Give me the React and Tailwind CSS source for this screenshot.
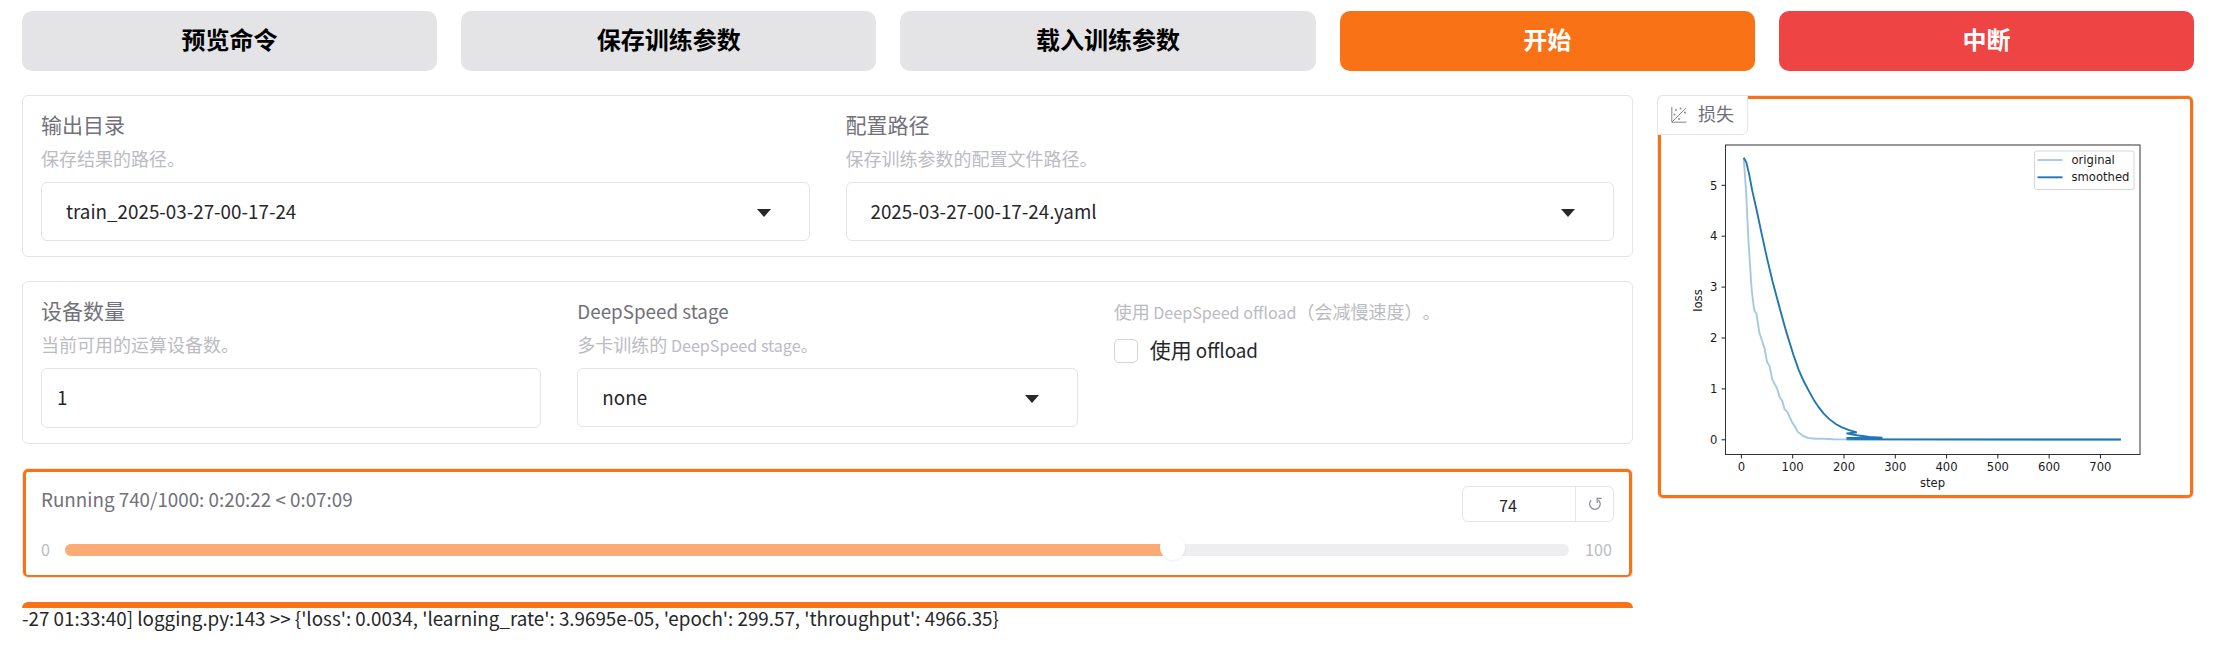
import React from "react";

const ACTIONS = [
  { label: "预览命令", tone: "bg-[#e4e4e7] text-black" },
  { label: "保存训练参数", tone: "bg-[#e4e4e7] text-black" },
  { label: "载入训练参数", tone: "bg-[#e4e4e7] text-black" },
  { label: "开始", tone: "bg-[#f97316] text-white" },
  { label: "中断", tone: "bg-[#ef4444] text-white" },
];

const ORIGINAL = [
  [4.5, 5.54], [9, 4.9], [14, 3.86], [20, 2.94], [25, 2.55], [29.5, 2.47], [35, 2.1], [45, 1.8],
  [50, 1.53], [55, 1.45], [60, 1.19], [69.5, 1.01], [75, 0.83], [80, 0.76], [84, 0.6], [89.5, 0.55],
  [99, 0.34], [104, 0.27], [109.5, 0.16], [121, 0.07], [130, 0.035], [145, 0.02], [160, 0.022],
  [180, 0.01], [740, 0.005],
];
const SMOOTHED = [
  [4.5, 5.54], [9.6, 5.45], [15, 5.22], [21, 4.9], [30, 4.5], [39, 4.07], [50, 3.57], [61, 3.1],
  [74, 2.61], [87, 2.14], [101, 1.68], [112, 1.37], [121, 1.16], [132, 0.95], [142, 0.77], [150, 0.65],
  [160, 0.52], [172, 0.4], [184, 0.31], [195, 0.25], [210, 0.19], [225, 0.145], [205, 0.125],
  [225, 0.09], [250, 0.055], [275, 0.04], [205, 0.035], [275, 0.02], [205, 0.01], [740, 0.005],
];

const px = (step) => 85.4 + step * 0.5129;
const py = (loss) => 344.8 - loss * 50.9;
const line = (data) => data.map(([s, l]) => `${px(s).toFixed(1)},${py(l).toFixed(1)}`).join(" ");

// Latin glyphs run large beside the Chinese ones, so they are set slightly smaller.
function Latin({ children }) {
  return <span className="text-[0.8955em] whitespace-pre">{children}</span>;
}

function Caret() {
  return (
    <svg width="14" height="8" viewBox="0 0 14 8" className="fill-[#27272a]">
      <path d="M0 0h14L7 8z" />
    </svg>
  );
}

function Field({ label, info, children }) {
  return (
    <div className="flex min-w-0 flex-1 flex-col">
      <div className="h-[31px] text-[21px] leading-[29px] text-[#71717a]">{label}</div>
      <div className="mt-[3px] h-[27px] text-[18px] leading-[28px] text-[#bbbbc2]">{info}</div>
      <div className="mt-[11px]">{children}</div>
    </div>
  );
}

function Select({ value }) {
  return (
    <div className="flex h-[59px] items-center justify-between rounded-[6px] border border-[#e4e4e7] pr-[38px] pl-[24px] text-[21px] text-[#27272a]">
      <span className="pb-[2px]"><Latin>{value}</Latin></span>
      <span className="pt-[2px]"><Caret /></span>
    </div>
  );
}

function LossChart() {
  return (
    <svg width="530" height="395" viewBox="0 0 530 395" fontFamily="'DejaVu Sans', sans-serif" fontSize="11.6" fill="#1a1a1a">
      <polyline points={line(ORIGINAL)} fill="none" stroke="#1f77b4" strokeOpacity="0.4" strokeWidth="1.9" />
      <polyline points={line(SMOOTHED)} fill="none" stroke="#1f77b4" strokeWidth="1.9" />
      <rect x="69.5" y="50" width="414.5" height="309.5" fill="none" stroke="#333" strokeWidth="1" />
      {[0, 1, 2, 3, 4, 5].map((n) => (
        <g key={n}>
          <path d={`M65.5 ${py(n)}h4`} stroke="#222" />
          <text x="61.5" y={py(n) + 4.2} textAnchor="end">{n}</text>
        </g>
      ))}
      {[0, 100, 200, 300, 400, 500, 600, 700].map((n) => (
        <g key={n}>
          <path d={`M${px(n)} 359.5v4`} stroke="#222" />
          <text x={px(n)} y="376.3" textAnchor="middle">{n}</text>
        </g>
      ))}
      <text x="276.5" y="391.5" textAnchor="middle">step</text>
      <text transform="translate(46 205.5) rotate(-90)" textAnchor="middle">loss</text>
      <rect x="378.5" y="56" width="99.5" height="38.5" rx="2" fill="#fff" stroke="#d6d6d6" />
      <path d="M381.5 65h25" stroke="#1f77b4" strokeOpacity="0.4" strokeWidth="1.9" />
      <path d="M381.5 82.3h25" stroke="#1f77b4" strokeWidth="1.9" />
      <text x="415.5" y="69">original</text>
      <text x="415.5" y="86.3">smoothed</text>
    </svg>
  );
}

export default function App() {
  return (
    <div className="flex h-[654px] w-[2235px] flex-col overflow-hidden bg-white pt-[11px] pr-[41px] pl-[22px] font-['Noto_Sans_CJK_SC',sans-serif] [text-spacing-trim:space-all]">
      <div className="flex gap-6">
        {ACTIONS.map((a) => (
          <button key={a.label} className={`h-[60px] flex-1 rounded-[10px] pb-[4px] text-[24px] font-bold ${a.tone}`}>
            {a.label}
          </button>
        ))}
      </div>

      <div className="mt-6 flex items-start gap-6">
        <div className="flex w-[1611px] shrink-0 flex-col gap-6">
          <section className="flex h-[162px] gap-[36px] rounded-[6px] border border-[#e4e4e7] px-[18px] pt-[14px]">
            <Field label="输出目录" info="保存结果的路径。"><Select value="train_2025-03-27-00-17-24" /></Field>
            <Field label="配置路径" info="保存训练参数的配置文件路径。"><Select value="2025-03-27-00-17-24.yaml" /></Field>
          </section>

          <section className="flex h-[163px] gap-[36px] rounded-[6px] border border-[#e4e4e7] px-[18px] pt-[14px]">
            <Field label="设备数量" info="当前可用的运算设备数。">
              <div className="flex h-[60px] items-center rounded-[6px] border border-[#e4e4e7] pb-[2px] pl-[15px] text-[21px] text-[#27272a]"><Latin>1</Latin></div>
            </Field>
            <Field label={<Latin>DeepSpeed stage</Latin>} info={<>多卡训练的<Latin> DeepSpeed stage</Latin>。</>}><Select value="none" /></Field>
            <div className="flex flex-1 flex-col">
              <div className="h-[31px] text-[18px] leading-[30px] text-[#bbbbc2]">使用<Latin> DeepSpeed offload</Latin>（会减慢速度）。</div>
              <label className="mt-[8px] flex h-[31px] items-center gap-[12px] text-[21px] leading-[31px] text-[#27272a]">
                <span className="size-[24px] rounded-[5px] border border-[#d4d4d8]" />
                <span className="-mt-[2px]">使用<Latin> offload</Latin></span>
              </label>
            </div>
          </section>

          <section className="rounded-[6px] border border-[#e4e4e7]">
            <div className="flex h-[108px] flex-col rounded-[5px] border-[3px] border-b-2 border-[#f97316] px-[15px] pt-[14px]">
              <div className="flex items-start justify-between">
                <div className="-mt-[3px] text-[21px] leading-[31px] text-[#71717a]"><Latin>Running 740/1000: 0:20:22 &lt; 0:07:09</Latin></div>
                <div className="flex h-[36px] w-[152px] rounded-[6px] border border-[#e4e4e7] text-[18px] leading-[34px]">
                  <div className="w-[112px] pr-[22px] text-center text-[#27272a]"><Latin>74</Latin></div>
                  <div className="flex flex-1 items-center justify-center border-l border-[#e4e4e7]">
                    <svg width="14" height="14" viewBox="0 0 14 14" fill="none" stroke="#8b8b93" strokeWidth="1.2">
                      <path d="M3.2 3.2A5.3 5.3 0 1 0 10.4 3M13.6 1.4H9.2V6" />
                    </svg>
                  </div>
                </div>
              </div>
              <div className="mt-[14px] flex h-[27px] items-center text-[18px] leading-[27px] text-[#bbbbc2]">
                <span className="w-[24px] pb-[1px]"><Latin>0</Latin></span>
                <div className="relative h-[12px] w-[1504px] rounded-[6px] bg-[#eeeef0]">
                  <div className="h-[12px] w-[1107px] rounded-l-[6px] bg-[#fdab75]" />
                  <div className="absolute -top-[9px] left-[1095px] size-[25px] rounded-full bg-white shadow-[0_1px_3px_rgba(0,0,0,0.08)]" />
                </div>
                <span className="ml-[16px] pb-[1px]"><Latin>100</Latin></span>
              </div>
            </div>
          </section>

          <section>
            <div className="h-[6px] rounded-t-[6px] bg-[#f97316]" />
            <div className="text-[21px] leading-[19px] whitespace-pre text-[#27272a]"><Latin>-27 01:33:40] logging.py:143 &gt;&gt; {"{'loss': 0.0034, 'learning_rate': 3.9695e-05, 'epoch': 299.57, 'throughput': 4966.35}"}</Latin></div>
          </section>
        </div>

        <section className="relative h-[404px] flex-1 rounded-[6px] border border-[#e4e4e7]">
          <div className="h-[402px] rounded-[5px] border-[3px] border-[#f97316]">
            <div className="-mt-[4px] -ml-[5px]"><LossChart /></div>
          </div>
          <div className="absolute -top-px -left-px flex h-[40px] w-[91px] items-center rounded-tl-[6px] rounded-br-[6px] border border-[#e4e4e7] bg-white pl-[13px] text-[18px] text-[#71717a]">
            <svg width="16" height="16" viewBox="0 0 16 16" fill="none" stroke="#85858c" strokeWidth="1">
              <path d="M.8 0v15.2H15.5M1 15 15 1" />
              <g fill="#85858c" stroke="none">
                <circle cx="5" cy="3" r=".9" /><circle cx="9.5" cy="1.5" r=".9" /><circle cx="3.5" cy="7.5" r=".9" /><circle cx="14" cy="5.5" r=".9" /><circle cx="8" cy="12" r=".9" />
              </g>
            </svg>
            <span className="-mt-[3px] ml-[11px]">损失</span>
          </div>
        </section>
      </div>
    </div>
  );
}
